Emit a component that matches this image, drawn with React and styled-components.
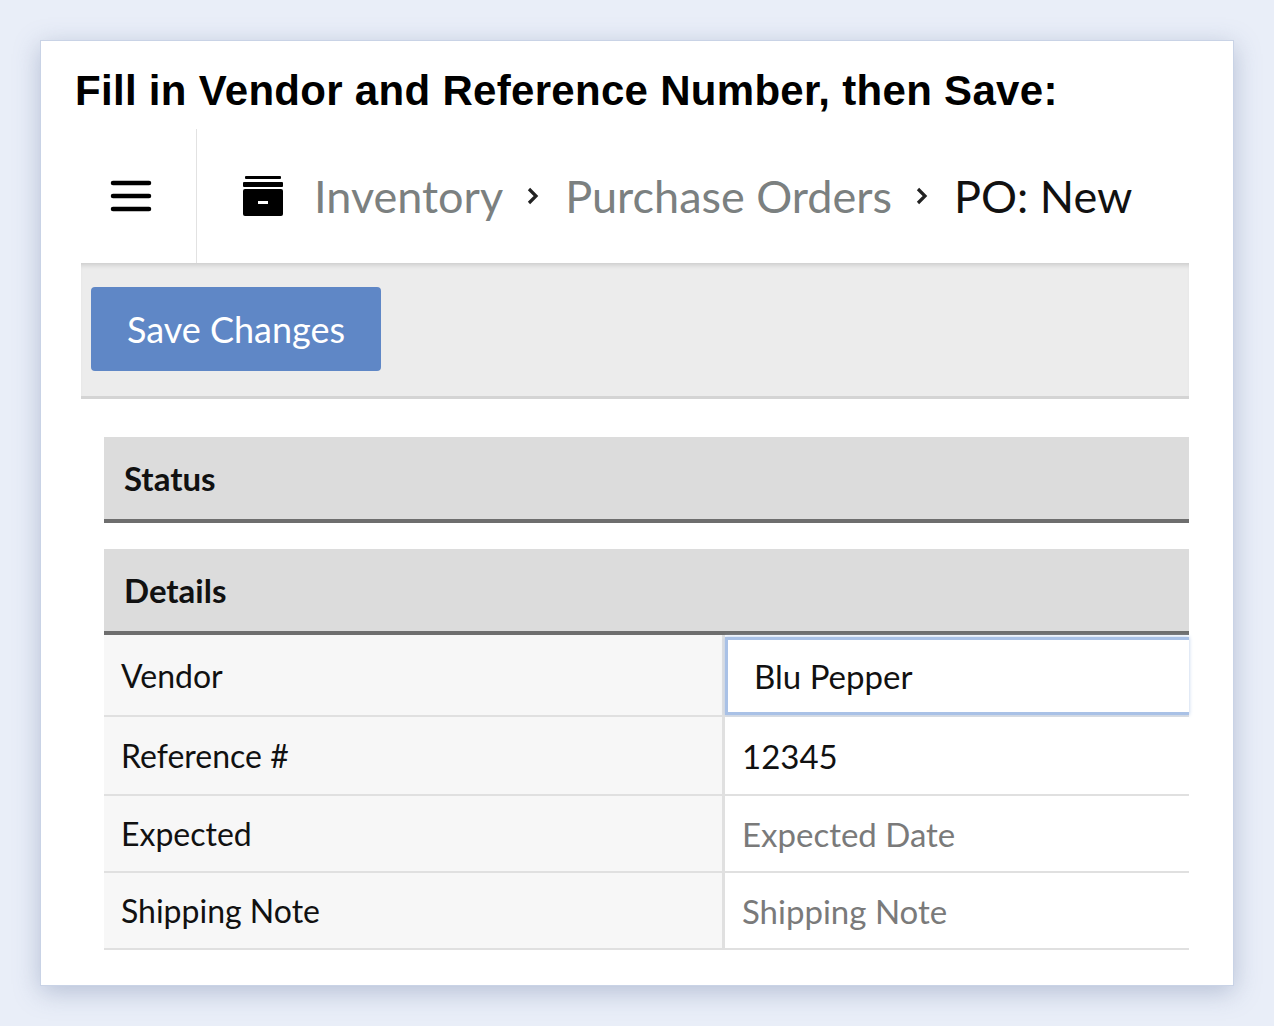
import React from "react";
import styled, { createGlobalStyle } from "styled-components";

const G = createGlobalStyle`
  body { margin:0; background:#e9eef8; font-family: Lato, "Open Sans", sans-serif; }
`;
const Page = styled.div`padding:40px 40px 40px 40px; height:1026px; box-sizing:border-box;`;
const Card = styled.div`
  background:#fff; height:946px; box-sizing:border-box; padding:0 44px 0 40px;
  box-shadow: 0 6px 24px rgba(120,135,170,0.45); border:1px solid #c9d3e6;
`;
const Title = styled.h1`
  margin:0 0 0 -6px; padding:26px 0 0 0; height:88px; box-sizing:border-box; white-space:nowrap;
  font:bold 42px "Liberation Sans", Arial, sans-serif; color:#000; letter-spacing:0.3px;
`;
const Header = styled.div`display:flex; height:134px; margin-left:-40px;`;
const Burger = styled.div`
  width:156px; border-right:1px solid #e2e2e2; display:flex; align-items:center;
  padding-left:69px; box-sizing:border-box;
`;
const Crumbs = styled.div`
  display:flex; align-items:center; padding-left:45px; font-size:45px; color:#7b8080;
`;
const Crumb = styled.span`color:${p=>p.$current?"#111":"#7b8080"}; margin-left:${p=>p.$ml||0}px;`;
const Sep = styled.span`display:flex; margin:0 26px 0 24px;`;
const Toolbar = styled.div`
  height:136px; background:#ececec; border-bottom:3px solid #d4d4d4; box-sizing:border-box;
  box-shadow: inset 0 5px 5px -3px rgba(0,0,0,0.15); padding:24px 10px;
`;
const Button = styled.button`
  width:290px; height:84px; background:#5f87c6; color:#fff; border:none; border-radius:4px;
  font:36px Lato, sans-serif; padding:0;
`;
const Body = styled.div`padding:38px 0 0 23px;`;
const Section = styled.div`
  height:86px; background:#dcdcdc; border-bottom:4px solid #6e6e6e; box-sizing:border-box;
  display:flex; align-items:center; padding-left:20px; font:bold 33px Lato, sans-serif; color:#111;
  margin-bottom:${p=>p.$mb||0}px;
`;
const Row = styled.div`
  display:grid; grid-template-columns:621px 1fr; height:${p=>p.$h}px;
  border-bottom:2px solid #e0e0e0; box-sizing:border-box;
`;
const Label = styled.div`
  background:#f7f7f7; border-right:3px solid #e0e0e0; display:flex; align-items:center;
  padding-left:17px; font-size:32px; color:#111;
`;
const Value = styled.div`
  display:flex; align-items:center; padding-left:${p=>p.$focus?26:17}px; font-size:33px;
  color:${p=>p.$ph?"#7a7a7a":"#111"}; background:#fff;
  ${p=>p.$focus?"border:3px solid #a9c1e6; border-right:none; box-shadow:0 0 4px #b7cbea; margin-top:2px;":""}
`;

const Chev = () => <Sep><svg width="12" height="18" viewBox="0 0 12 18"><path d="M2 2l7 7-7 7" fill="none" stroke="#222" strokeWidth="3.2"/></svg></Sep>;

export default function App(){
  return <Page><G/><Card>
    <Title>Fill in Vendor and Reference Number, then Save:</Title>
    <Header>
      <Burger>
        <svg width="42" height="34" viewBox="0 0 42 34"><g stroke="#000" strokeWidth="4.5" strokeLinecap="round"><line x1="3" y1="4" x2="39" y2="4"/><line x1="3" y1="17" x2="39" y2="17"/><line x1="3" y1="30" x2="39" y2="30"/></g></svg>
      </Burger>
      <Crumbs>
        <svg width="42" height="42" viewBox="0 0 42 42"><rect x="3" y="1" width="36" height="3" rx="1"/><rect x="1" y="7" width="40" height="5" rx="1"/><rect x="1" y="14" width="40" height="27" rx="2"/><rect x="16" y="26" width="10" height="3" fill="#fff"/></svg>
        <Crumb $ml={30}>Inventory</Crumb><Chev/>
        <Crumb>Purchase Orders</Crumb><Chev/>
        <Crumb $current>PO: New</Crumb>
      </Crumbs>
    </Header>
    <Toolbar><Button>Save Changes</Button></Toolbar>
    <Body>
      <Section $mb={26}>Status</Section>
      <Section>Details</Section>
      <Row $h={82}><Label>Vendor</Label><Value $focus>Blu Pepper</Value></Row>
      <Row $h={79}><Label>Reference #</Label><Value>12345</Value></Row>
      <Row $h={77}><Label>Expected</Label><Value $ph>Expected Date</Value></Row>
      <Row $h={77}><Label>Shipping Note</Label><Value $ph>Shipping Note</Value></Row>
    </Body>
  </Card></Page>;
}
